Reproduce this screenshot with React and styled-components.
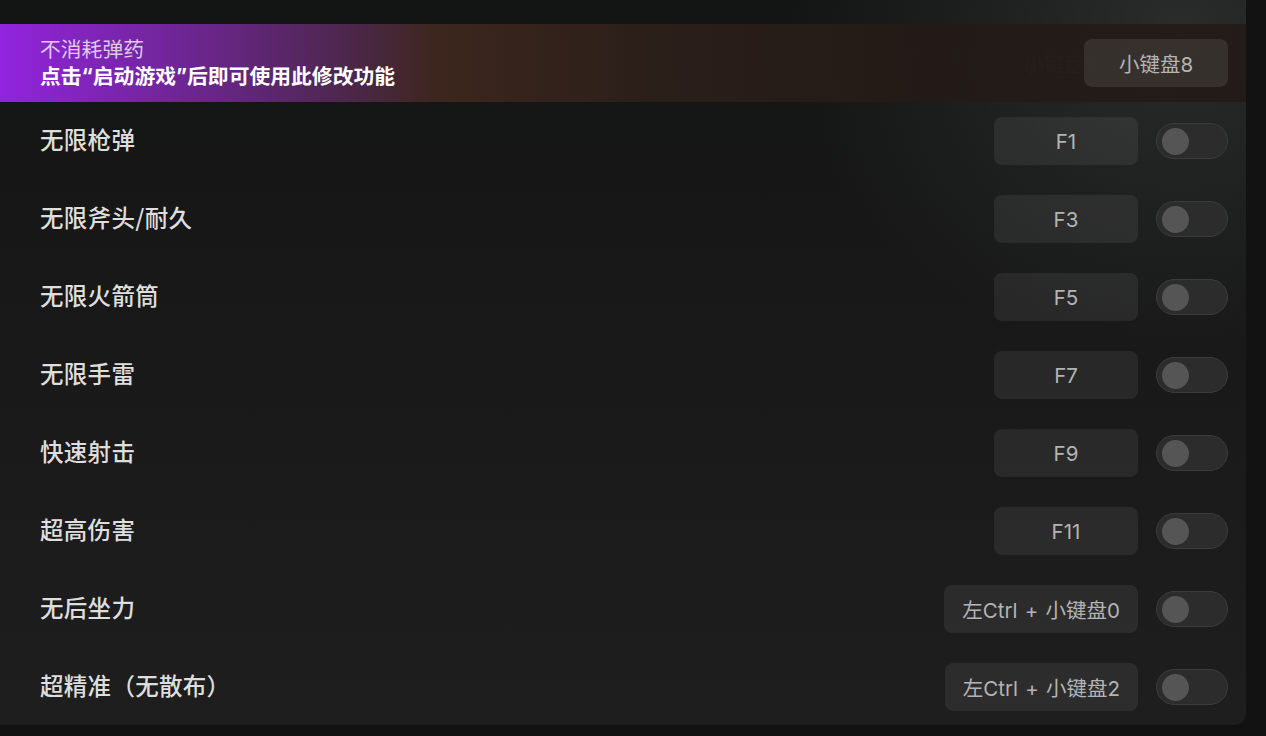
import React from "react";
import styled, { createGlobalStyle } from "styled-components";

const Global = createGlobalStyle`
  html, body { margin: 0; padding: 0; background: #121212; }
  body { font-family: Inter, "Noto Sans CJK SC", sans-serif; overflow: hidden; }
  * { box-sizing: border-box; }
`;

const Page = styled.div`
  width: 1266px;
  height: 736px;
  background: #121212;
  display: flex;
  align-items: flex-start;
`;

const Panel = styled.div`
  position: relative;
  width: 1246px;
  height: 725px;
  border-bottom-right-radius: 12px;
  overflow: hidden;
  padding-top: 24px;
  background:
    radial-gradient(ellipse 560px 460px at 1180px 30px, rgba(62, 68, 66, 0.5), rgba(62, 68, 66, 0) 70%),
    linear-gradient(180deg, #131414 0%, #161716 30%, #1b1b1b 70%, #1e1e1e 100%);
`;

const List = styled.div`
  display: flex;
  flex-direction: column;
`;

const Row = styled.div`
  position: relative;
  height: 78px;
  display: flex;
  align-items: center;
  padding: 0 18px 0 40px;
`;

const Label = styled.div`
  flex: 1;
  font-family: "Noto Sans CJK SC", sans-serif;
  font-size: 23.5px;
  font-weight: 500;
  color: #dedede;
  letter-spacing: 0.3px;
  padding-bottom: 5px;
`;

const Key = styled.div`
  height: 48px;
  min-width: 144px;
  padding: 0 18px;
  border-radius: 8px;
  background: rgba(255, 255, 255, 0.065);
  display: flex;
  align-items: center;
  justify-content: center;
  font-family: Inter, "Noto Sans CJK SC", sans-serif;
  font-size: 20.5px;
  word-spacing: 1.5px;
  color: #b4b4b4;
  white-space: nowrap;
`;

const Ghost = styled.div`
  font-family: Inter, "Noto Sans CJK SC", sans-serif;
  font-size: 20.5px;
  font-weight: 600;
  color: rgba(255, 255, 255, 0.07);
  margin-right: -14px;
`;

const Toggle = styled.div`
  width: 72px;
  height: 36px;
  margin-left: 18px;
  border-radius: 18px;
  background: #2c2c2c;
  border: 1px solid #3b3b3b;
  display: flex;
  align-items: center;
  padding-left: 5px;
`;

const Knob = styled.div`
  width: 27px;
  height: 27px;
  border-radius: 50%;
  background: #555555;
`;

const Banner = styled.div`
  position: absolute;
  left: 0;
  top: 0;
  right: 0;
  height: 78px;
  display: flex;
  flex-direction: column;
  justify-content: center;
  padding-left: 40px;
  gap: 2px;
  background: linear-gradient(
    90deg,
    rgba(146, 36, 222, 1) 0%,
    rgba(112, 38, 150, 0.97) 15%,
    rgba(82, 40, 84, 0.95) 27%,
    rgba(64, 40, 30, 0.92) 35%,
    rgba(46, 32, 26, 0.88) 52%,
    rgba(36, 26, 22, 0.85) 75%,
    rgba(34, 25, 22, 0.85) 100%
  );
  font-family: Inter, "Noto Sans CJK SC", sans-serif;
`;

const BannerTitle = styled.div`
  font-size: 20.8px;
  color: #dccbe6;
  line-height: 25px;
`;

const BannerText = styled.div`
  font-size: 20.8px;
  font-weight: 700;
  color: #ffffff;
  line-height: 25px;
`;

const TopKey = styled(Key)`
  position: relative;
  z-index: 2;
  background: rgba(62, 56, 52, 0.75);
`;

const rows = [
  ["无限枪弹", "F1"],
  ["无限斧头/耐久", "F3"],
  ["无限火箭筒", "F5"],
  ["无限手雷", "F7"],
  ["快速射击", "F9"],
  ["超高伤害", "F11"],
  ["无后坐力", "左Ctrl + 小键盘0"],
  ["超精准（无散布）", "左Ctrl + 小键盘2"],
];

export default function App() {
  return (
    <>
      <Global />
      <Page>
        <Panel>
          <List>
            <Row>
              <Label />
              <Ghost>小键盘8</Ghost>
              <Banner>
                <BannerTitle>不消耗弹药</BannerTitle>
                <BannerText>点击“启动游戏”后即可使用此修改功能</BannerText>
              </Banner>
              <TopKey>小键盘8</TopKey>
            </Row>
            {rows.map(([label, key]) => (
              <Row key={label}>
                <Label>{label}</Label>
                <Key>{key}</Key>
                <Toggle>
                  <Knob />
                </Toggle>
              </Row>
            ))}
          </List>
        </Panel>
      </Page>
    </>
  );
}
